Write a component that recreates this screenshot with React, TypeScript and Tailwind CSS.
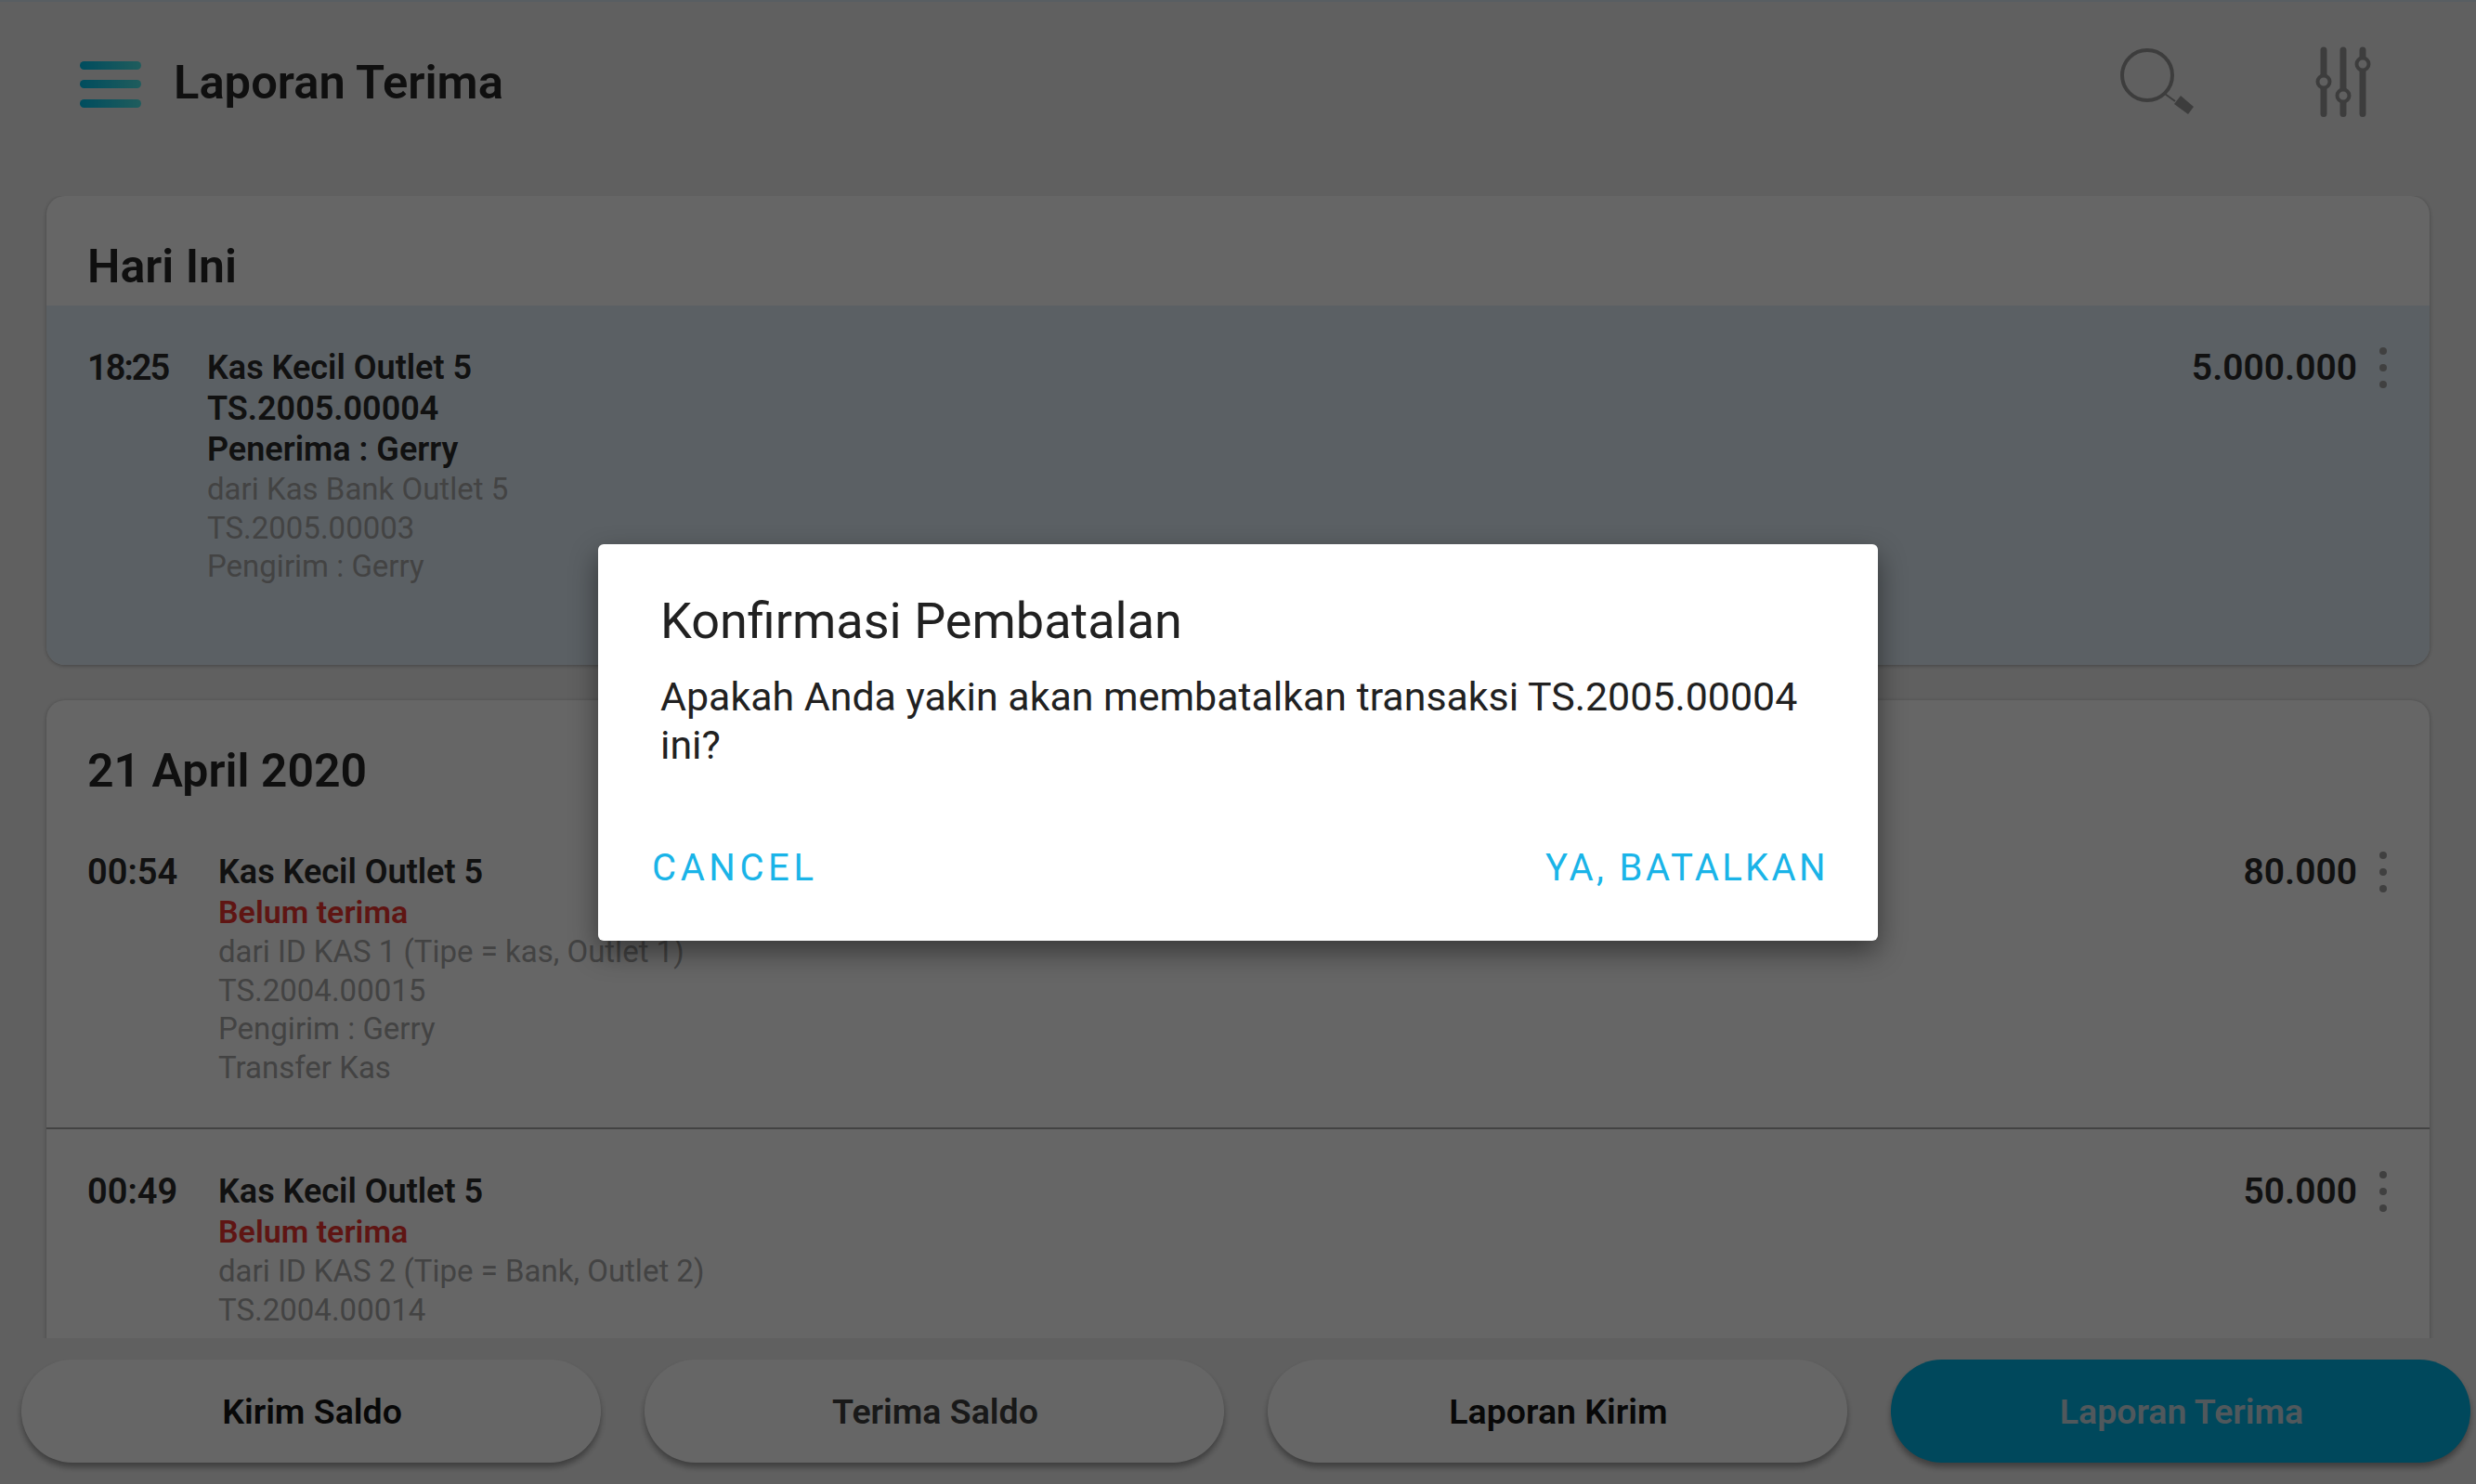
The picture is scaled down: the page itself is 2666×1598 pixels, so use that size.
const FONT = "font-['Roboto','Liberation_Sans',sans-serif]";

function Row({ time, timeClass, lines, amount, textX, rowH, highlight, divider }: { time: string; timeClass?: string; lines: { t: string; k: 'b' | 'r' | 'g' }[]; amount: string; textX: string; rowH: string; highlight?: boolean; divider?: boolean }) {
  return (
    <div className={`flex items-start pl-[44px] pt-[45px] pr-[46px] ${rowH} ${highlight ? 'bg-[#e4f0fa]' : ''} ${divider ? 'border-b-2 border-[#a8a8a8]' : ''}`}>
      <div className={`${textX} shrink-0 text-[38px] leading-[44px] font-semibold text-[#2b2b2b] ${timeClass ?? ''}`}>{time}</div>
      <div className="flex-1">
        {lines.map((l, i) => (
          <div
            key={i}
            className={
              l.k === 'b'
                ? 'text-[36px] leading-[44px] font-semibold text-[#2b2b2b]'
                : l.k === 'r'
                  ? 'text-[34px] leading-[43px] font-semibold text-[#ee3530]'
                  : 'text-[33px] leading-[41.7px] text-[#a8a8a8]'
            }
          >
            {l.t}
          </div>
        ))}
      </div>
      <div className="text-[39px] leading-[44px] font-semibold text-[#2b2b2b]">{amount}</div>
      <div className="ml-[24px] flex h-[44px] w-[8px] flex-col items-center justify-between">
        <span className="size-[8px] rounded-full bg-[#a0a0a0]" />
        <span className="size-[8px] rounded-full bg-[#a0a0a0]" />
        <span className="size-[8px] rounded-full bg-[#a0a0a0]" />
      </div>
    </div>
  );
}

function NavButton({ label, active, muted }: { label: string; active?: boolean; muted?: boolean }) {
  return (
    <div className={`flex h-[111px] flex-1 items-center justify-center rounded-[55px] pl-[2px] pt-[2px] text-[37.5px] font-semibold shadow-[0_5px_6px_rgba(0,0,0,0.35)] ${active ? 'bg-[#00b4e6] text-[#c8dde5]' : 'bg-white'} ${muted ? 'text-[#404040]' : active ? '' : 'text-[#141414]'}`}>
      {label}
    </div>
  );
}

export default function App() {
  return (
    <div className={`relative flex h-[1598px] w-[2666px] flex-col overflow-hidden bg-[#f0f0f0] ${FONT}`}>
      <header className="flex h-[211px] shrink-0 items-start border-t-2 border-[#dceaf4] pl-[86px] pr-[109px] pt-[50px]">
        <svg width="66" height="62" viewBox="0 0 66 62" className="mt-[14px]">
          <defs>
            <linearGradient id="m" x1="0" x2="1" y1="0" y2="0">
              <stop offset="0" stopColor="#00c0ec" />
              <stop offset="1" stopColor="#50e8e8" />
            </linearGradient>
          </defs>
          <rect x="0" y="0" width="66" height="9" rx="4.5" fill="url(#m)" />
          <rect x="0" y="20" width="66" height="9" rx="4.5" fill="url(#m)" />
          <rect x="0" y="41" width="66" height="9" rx="4.5" fill="url(#m)" />
        </svg>
        <div className="ml-[35px] mt-[7px] text-[50.7px] leading-[60px] font-semibold text-[#262626]">Laporan Terima</div>
        <div className="flex-1" />
        <svg width="88" height="84" viewBox="0 0 88 84" className="mr-[125px]">
          <circle cx="34" cy="29" r="27" fill="none" stroke="#999" strokeWidth="4" />
          <path d="M53 49 L64 57" stroke="#999" strokeWidth="2" />
          <path d="M70 51 L84 63 L78 71 L63 60 Z" fill="#999" />
        </svg>
        <svg width="66" height="84" viewBox="0 0 66 84" className="mt-[-4px]">
          <g stroke="#999" strokeWidth="7" strokeLinecap="round" fill="none">
            <path d="M11 6V74.5M32 6V74.5M53 6V74.5" />
          </g>
          <g fill="#f0f0f0" stroke="#999" strokeWidth="4">
            <circle cx="11" cy="40" r="6.5" />
            <circle cx="32" cy="55" r="6.5" />
            <circle cx="53" cy="21" r="6.5" />
          </g>
        </svg>
      </header>

      <main className="flex-1 overflow-hidden px-[50px]">
        <section className="rounded-[20px] bg-white shadow-[0_1px_4px_rgba(0,0,0,0.3)] overflow-hidden">
          <h2 className="flex h-[118px] items-center pl-[44px] pt-[34px] text-[50px] font-semibold text-[#262626]">Hari Ini</h2>
          <Row
            highlight
            rowH="h-[387px]"
            textX="w-[129px]"
            timeClass="tracking-[-2px]"
            time="18:25"
            amount="5.000.000"
            lines={[
              { t: 'Kas Kecil Outlet 5', k: 'b' },
              { t: 'TS.2005.00004', k: 'b' },
              { t: 'Penerima : Gerry', k: 'b' },
              { t: 'dari Kas Bank Outlet 5', k: 'g' },
              { t: 'TS.2005.00003', k: 'g' },
              { t: 'Pengirim : Gerry', k: 'g' },
            ]}
          />
        </section>
        <section className="mt-[38px] rounded-t-[20px] bg-white shadow-[0_1px_4px_rgba(0,0,0,0.3)]">
          <h2 className="flex h-[118px] items-center pl-[44px] pt-[34px] text-[50px] font-semibold text-[#262626]">21 April 2020</h2>
          <Row
            divider
            rowH="h-[344px]"
            textX="w-[141px]"
            time="00:54"
            amount="80.000"
            lines={[
              { t: 'Kas Kecil Outlet 5', k: 'b' },
              { t: 'Belum terima', k: 'r' },
              { t: 'dari ID KAS 1 (Tipe = kas, Outlet 1)', k: 'g' },
              { t: 'TS.2004.00015', k: 'g' },
              { t: 'Pengirim : Gerry', k: 'g' },
              { t: 'Transfer Kas', k: 'g' },
            ]}
          />
          <Row
            rowH="h-[344px]"
            textX="w-[141px]"
            time="00:49"
            amount="50.000"
            lines={[
              { t: 'Kas Kecil Outlet 5', k: 'b' },
              { t: 'Belum terima', k: 'r' },
              { t: 'dari ID KAS 2 (Tipe = Bank, Outlet 2)', k: 'g' },
              { t: 'TS.2004.00014', k: 'g' },
            ]}
          />
        </section>
      </main>

      <footer className="relative flex h-[157px] shrink-0 items-start gap-[47px] bg-[#f0f0f0] pl-[23px] pr-[6px] pt-[23px]">
        <NavButton label="Kirim Saldo" />
        <NavButton label="Terima Saldo" muted />
        <NavButton label="Laporan Kirim" />
        <NavButton label="Laporan Terima" active />
      </footer>

      <div className="absolute inset-0 flex items-center justify-center bg-black/60">
        <div className="flex h-[427px] w-[1378px] flex-col rounded-[6px] bg-white pl-[67px] pr-[53px] shadow-[0_12px_30px_rgba(0,0,0,0.45)]">
          <div className="mt-[51px] text-[54px] leading-[64px] text-[#212121]">Konfirmasi Pembatalan</div>
          <div className="mt-[23px] pr-[5px] text-[42.9px] leading-[52px] text-[#212121]">Apakah Anda yakin akan membatalkan transaksi TS.2005.00004 ini?</div>
          <div className="ml-[-9px] mt-[83px] flex justify-between text-[40px] leading-[48px] tracking-[3.4px] text-[#1ab4e8]">
            <span className="tracking-[4.6px]">CANCEL</span>
            <span>YA, BATALKAN</span>
          </div>
        </div>
      </div>
    </div>
  );
}
